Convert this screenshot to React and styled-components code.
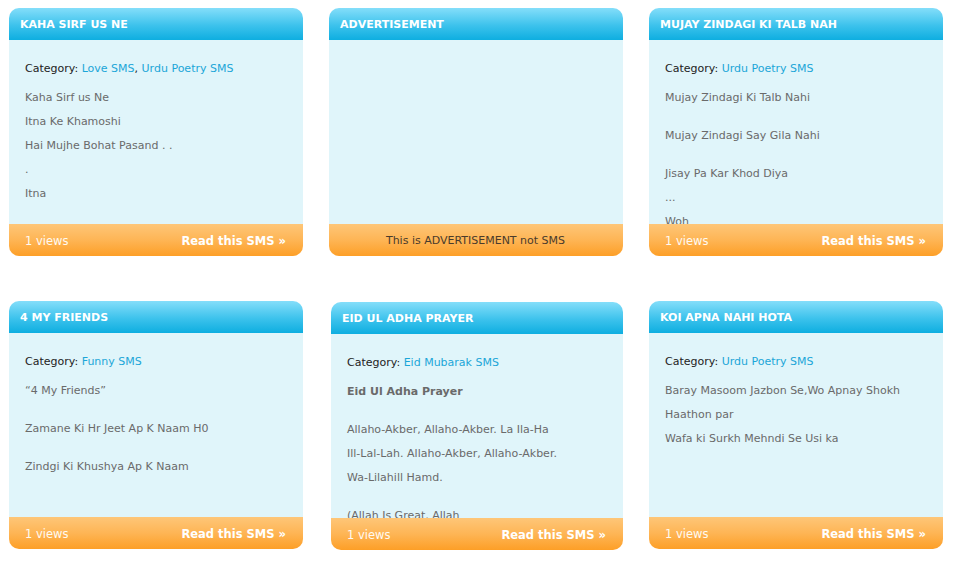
import React from 'react';
import styled, { createGlobalStyle } from 'styled-components';

const GlobalStyle = createGlobalStyle`
  body {
    margin: 0;
    background: #ffffff;
    font-family: "DejaVu Sans", Verdana, sans-serif;
  }
`;

const Grid = styled.div`
  display: grid;
  grid-template-columns: repeat(3, 294px);
  column-gap: 26px;
  row-gap: 45px;
  padding: 8px 9px;
`;

const Card = styled.div`
  display: flex;
  flex-direction: column;
  height: 248px;
  margin: ${p => (p.$nudge ? '1px 0 0 2px' : '0')};
`;

const Header = styled.div`
  height: 32px;
  box-sizing: border-box;
  padding: 5px 11px 0;
  line-height: 24px;
  border-radius: 10px 10px 0 0;
  background: linear-gradient(to bottom, #84defa 0%, #3cc2ec 55%, #0eaee0 100%);
  color: #ffffff;
  font-size: 11px;
  font-weight: bold;
  white-space: nowrap;
  overflow: hidden;
`;

const Body = styled.div`
  flex: 1;
  overflow: hidden;
  padding: 17px 14px 0 16px;
  background: #e0f5fa;
  font-size: 11px;
  line-height: 24px;
  color: #6a6a6a;
`;

const Category = styled.div`
  color: #222222;
  margin-bottom: 5px;
`;

const Link = styled.a`
  color: #1ba6d8;
  text-decoration: none;
`;

const Para = styled.p`
  margin: 0 0 14px;
  font-weight: ${p => (p.$bold ? 'bold' : 'normal')};
`;

const Footer = styled.div`
  height: 32px;
  box-sizing: border-box;
  display: flex;
  align-items: center;
  justify-content: ${p => (p.$center ? 'center' : 'space-between')};
  padding: 1px 17px 0 16px;
  border-radius: 0 0 10px 10px;
  background: linear-gradient(to bottom, #fec678 0%, #feb555 50%, #fd9f27 100%);
  font-size: 11px;
`;

const Views = styled.span`
  color: #fffaf2;
  font-size: 11.5px;
`;

const ReadMore = styled.a`
  color: #ffffff;
  font-weight: bold;
  font-size: 11.5px;
  text-decoration: none;
`;

const AdNote = styled.span`
  color: #4a3b2c;
`;

const cards = [
  {
    title: 'KAHA SIRF US NE',
    categories: ['Love SMS', 'Urdu Poetry SMS'],
    paras: [{ lines: ['Kaha Sirf us Ne', 'Itna Ke Khamoshi', 'Hai Mujhe Bohat Pasand . .', '.', 'Itna'] }],
  },
  { title: 'ADVERTISEMENT', ad: true },
  {
    title: 'MUJAY ZINDAGI KI TALB NAH',
    categories: ['Urdu Poetry SMS'],
    paras: [
      { lines: ['Mujay Zindagi Ki Talb Nahi'] },
      { lines: ['Mujay Zindagi Say Gila Nahi'] },
      { lines: ['Jisay Pa Kar Khod Diya', '...', 'Woh', 'Zindagi'] },
    ],
  },
  {
    title: '4 MY FRIENDS',
    categories: ['Funny SMS'],
    paras: [
      { lines: ['\u201c4 My Friends\u201d'] },
      { lines: ['Zamane Ki Hr Jeet Ap K Naam H0'] },
      { lines: ['Zindgi Ki Khushya Ap K Naam'] },
    ],
  },
  {
    title: 'EID UL ADHA PRAYER',
    categories: ['Eid Mubarak SMS'],
    nudge: true,
    paras: [
      { lines: ['Eid Ul Adha Prayer'], bold: true },
      { lines: ['Allaho-Akber, Allaho-Akber. La Ila-Ha', 'Ill-Lal-Lah. Allaho-Akber, Allaho-Akber.', 'Wa-Lilahill Hamd.'] },
      { lines: ['(Allah Is Great, Allah', 'Is Great'] },
    ],
  },
  {
    title: 'KOI APNA NAHI HOTA',
    categories: ['Urdu Poetry SMS'],
    paras: [{ lines: ['Baray Masoom Jazbon Se,Wo Apnay Shokh Haathon par', 'Wafa ki Surkh Mehndi Se Usi ka'] }],
  },
];

function SmsCard({ card }) {
  return (
    <Card $nudge={card.nudge}>
      <Header>{card.title}</Header>
      <Body>
        {!card.ad && (
          <>
            <Category>
              Category:{' '}
              {card.categories.map((c, i) => (
                <React.Fragment key={c}>
                  {i > 0 && ', '}
                  <Link href="#">{c}</Link>
                </React.Fragment>
              ))}
            </Category>
            {card.paras.map((p, i) => (
              <Para key={i} $bold={p.bold}>
                {p.lines.map((l, j) => (
                  <React.Fragment key={j}>
                    {j > 0 && <br />}
                    {l}
                  </React.Fragment>
                ))}
              </Para>
            ))}
          </>
        )}
      </Body>
      {card.ad ? (
        <Footer $center>
          <AdNote>This is ADVERTISEMENT not SMS</AdNote>
        </Footer>
      ) : (
        <Footer>
          <Views>1 views</Views>
          <ReadMore href="#">Read this SMS &raquo;</ReadMore>
        </Footer>
      )}
    </Card>
  );
}

export default function App() {
  return (
    <>
      <GlobalStyle />
      <Grid>
        {cards.map(c => (
          <SmsCard key={c.title} card={c} />
        ))}
      </Grid>
    </>
  );
}
